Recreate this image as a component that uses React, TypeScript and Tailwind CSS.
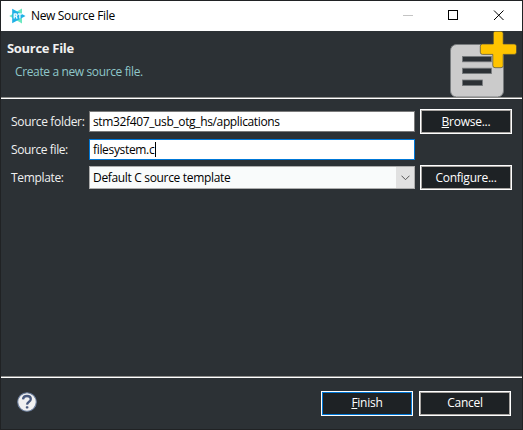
import React from 'react';

function AppLogo() {
  return (
    <svg width="17" height="16" viewBox="0 0 17 16" className="shrink-0">
      <path d="M13 0.500V15.500L0.300 8Z" fill="#6be8c0" />
      <path d="M3.200 0.800 16.500 8 3.200 15.200Z" fill="#1fb1e6" />
      <path d="M5.200 5.400v5.200M5.200 6h1.800q1 0 1 1.100t-1 1.100H5.200M6.800 8.200l1.400 2.400M9 6h3.800M10.900 6v4.600" stroke="#f0fcff" strokeWidth="1.300" fill="none" />
    </svg>
  );
}

function NewFileArt() {
  return (
    <svg width="68" height="67" viewBox="0 0 68 67" className="shrink-0">
      <rect x="0.500" y="13.500" width="53" height="52.500" rx="6" fill="#cbcbcb" stroke="#777b7d" />
      <g fill="#2c3135" stroke="#777b7d" strokeWidth="0.800">
        <rect x="12.400" y="25.400" width="29" height="5.400" />
        <rect x="12.400" y="37.200" width="29" height="5.400" />
        <rect x="12.400" y="49" width="20" height="5.600" />
      </g>
      <path d="M45 0.300h6q2.200 0 2.200 2.200V13h11q2.300 0 2.300 2.200v6q0 2.200-2.200 2.200H53.200V34.500q0 2.200-2.200 2.200h-6q-2.200 0-2.200-2.200V23.400H32.500q-2.200 0-2.200-2.200v-6Q30.300 13 32.500 13H43.300V2.500Q43.300 0.300 45 0.300Z" fill="#ffc400" stroke="#4b4a3c" strokeWidth="0.700" />
    </svg>
  );
}

function HelpIcon() {
  return (
    <svg width="20" height="20" viewBox="0 0 20 20" className="mb-[2px]">
      <circle cx="10" cy="10" r="9.300" fill="#f1f1f1" stroke="#6a7c9b" strokeWidth="1.100" />
      <path d="M6 7.300Q6.300 4 10 4T13.800 7Q13.800 8.600 12 9.700T10 12.700" fill="none" stroke="#48597d" strokeWidth="2.300" />
      <rect x="8.800" y="14.200" width="2.600" height="2.300" rx="0.700" fill="#48597d" />
    </svg>
  );
}

function Button({ primary, children }: { primary?: boolean; children: React.ReactNode }) {
  return (
    <button className="h-[25px] w-[92px] shrink-0 border border-white bg-[#1e2225] tracking-[-0.25px] text-white">
      <span className={`flex h-full w-full items-center justify-center border ${primary ? 'border-[#0078d7]' : 'border-[#a9a6a3]'}`}>
        <span>{children}</span>
      </span>
    </button>
  );
}

function Separator() {
  return <div className="h-[2px] shrink-0 border-t border-[#8d8d8b] bg-white" />;
}

export default function App() {
  return (
    <div className="flex h-[430px] w-[523px] flex-col border border-[#202224] bg-[#2c3135] font-['Open_Sans','Noto_Sans',sans-serif] text-[12px] leading-[16px] tracking-[-0.33px] text-[#f0f0f0]">
      <header className="flex h-[30px] shrink-0 items-center bg-white pl-2 text-black">
        <AppLogo />
        <span className="ml-[5px] grow">New Source File</span>
        <svg width="120" height="30" viewBox="0 0 120 30" fill="none" shapeRendering="crispEdges">
          <path d="M1 14.500H11" stroke="#c4c4c4" />
          <rect x="46.500" y="9.500" width="9" height="9" stroke="#000" />
          <path d="M92 9.500 101.500 19M101.500 9.500 92 19" stroke="#000" shapeRendering="auto" />
        </svg>
      </header>

      <section className="flex h-[66px] shrink-0 justify-between pr-[4px]">
        <div className="pl-[6px] pt-[9px]">
          <h1 className="text-[13px] font-bold tracking-[-0.3px]">Source File</h1>
          <p className="mt-[8px] pl-2 tracking-[-0.37px] text-[#8fc7c9]">Create a new source file.</p>
        </div>
        <NewFileArt />
      </section>
      <Separator />

      <main className="flex grow flex-col pl-[10px] pr-[9px] pt-[10px]">
        <div className="flex h-[25px] items-center">
          <label className="w-[78px] shrink-0 whitespace-nowrap">Source folder:</label>
          <div className="mr-[5px] flex h-[21px] w-[326px] items-center border border-[#7a7a7a] bg-white pl-[3px] tracking-[-0.36px] text-black">stm32f407_usb_otg_hs/applications</div>
          <Button><u>B</u>rowse...</Button>
        </div>
        <div className="mt-[3px] flex h-[25px] items-center">
          <label className="w-[78px] shrink-0 tracking-[-0.4px]">Source file:</label>
          <div className="flex h-[21px] w-[326px] items-center border border-[#0078d7] bg-white pl-[3px] text-black">
            <span>filesystem.c</span>
            <i className="ml-px h-[15px] w-px bg-black" />
          </div>
        </div>
        <div className="mt-[3px] flex h-[25px] items-center">
          <label className="w-[78px] shrink-0">Template:</label>
          <div className="mr-[5px] flex h-[23px] w-[326px] items-center border border-[#adadad] bg-[#f9fbfb] pl-[3px] text-black">
            <span className="grow">Default C source template</span>
            <span className="flex h-full w-[18px] items-center justify-center bg-[#e1e1e1]">
              <svg width="9" height="6" viewBox="0 0 9 6" fill="none" stroke="#555"><path d="M0.500 0.700 4.500 4.700 8.500 0.700" /></svg>
            </span>
          </div>
          <Button>Configure...</Button>
        </div>
      </main>
      <Separator />

      <footer className="flex h-[51px] shrink-0 items-center pb-[1px] pl-[16px] pr-[11px]">
        <HelpIcon />
        <div className="ml-auto flex gap-[6px]">
          <Button primary><u>F</u>inish</Button>
          <Button>Cancel</Button>
        </div>
      </footer>
    </div>
  );
}
